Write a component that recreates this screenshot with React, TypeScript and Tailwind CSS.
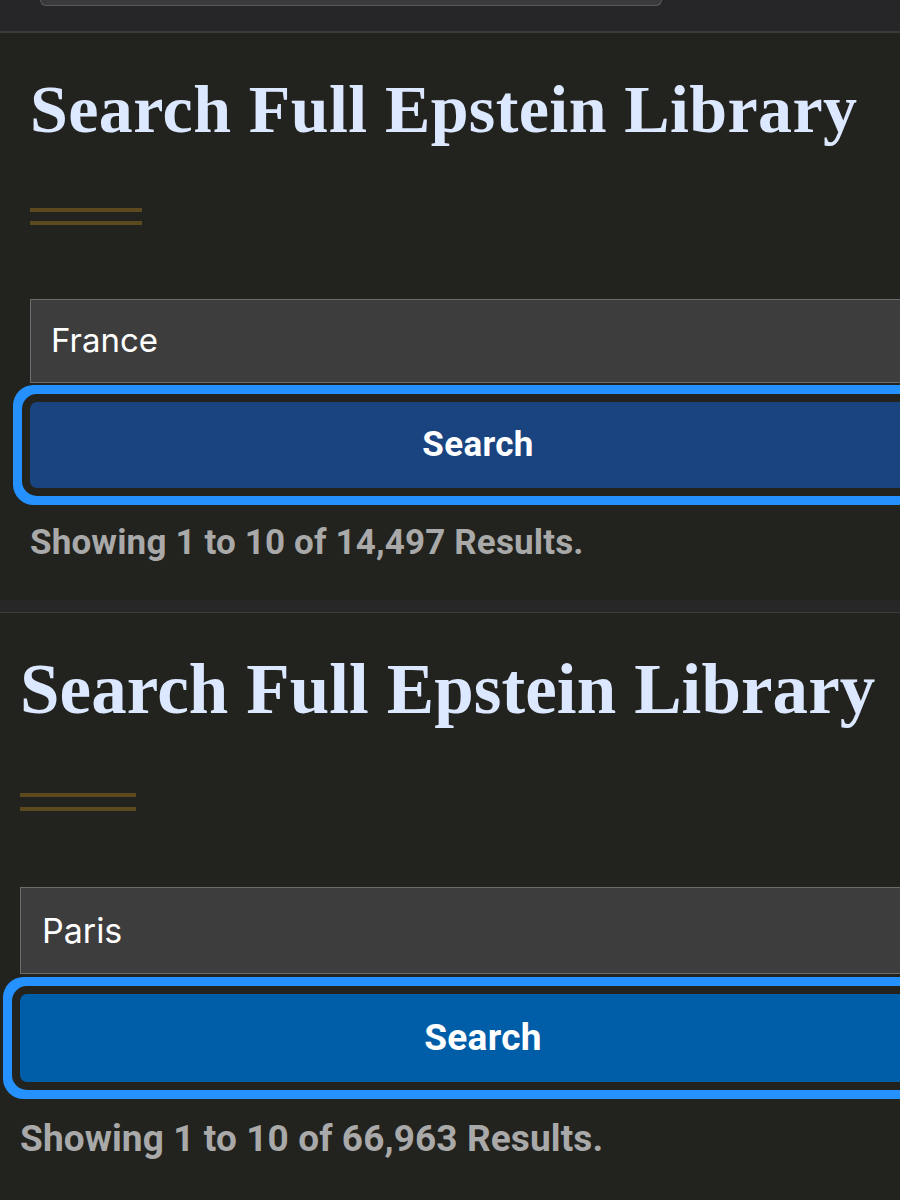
export default function App() {
  return (
    <div className="w-[900px] h-[1200px] overflow-hidden bg-[#22221e]">
      {/* cut-off toolbar from the previous screen */}
      <div className="h-[31px] bg-[#262628]">
        <div className="ml-[40px] w-[622px] h-[6px] rounded-b-[12px] bg-[#3a3a3c] border border-t-0 border-[#58585a]" />
      </div>
      <div className="h-[2px] bg-[#3a3a3b]" />

      {/* first capture */}
      <section className="h-[567px] pl-[30px] flex flex-col items-start">
        <h1 className="mt-[42px] text-[68px] leading-none font-bold tracking-[0.4px] text-[#dce8ff] whitespace-nowrap [font-family:'Liberation_Serif',serif]">
          Search Full Epstein Library
        </h1>
        <div className="mt-[65px] flex flex-col gap-[9px] w-[112px]">
          <div className="h-[4px] bg-[#5c4a1e]" />
          <div className="h-[4px] bg-[#5c4a1e]" />
        </div>
        <div className="mt-[74px] w-[896px] h-[84px] shrink-0 flex items-center pl-[20px] bg-[#3d3d3d] border border-[#6c6c6c] text-[33px] text-white [font-family:Inter,sans-serif]">
          France
        </div>
        <button className="block mt-[19px] w-[896px] h-[86px] shrink-0 rounded-[7px] bg-[#1a4480] text-white text-[35px] font-bold tracking-[0.3px] shadow-[0_0_0_8px_#22221e,0_0_0_17px_#2491ff] [font-family:Roboto,sans-serif]">
          Search
        </button>
        <p className="mt-[37px] text-[35px] leading-none font-bold tracking-[0.15px] text-[#a9a9a9] whitespace-nowrap [font-family:Roboto,sans-serif]">
          Showing 1 to 10 of 14,497 Results.
        </p>
      </section>

      <div className="h-[12px] bg-[#272727]" />
      <div className="h-px bg-[#3c3c3c]" />

      {/* second capture */}
      <section className="pl-[20px] flex flex-col items-start">
        <h1 className="mt-[41px] text-[71px] leading-none font-bold tracking-[0.1px] text-[#dce8ff] whitespace-nowrap [font-family:'Liberation_Serif',serif]">
          Search Full Epstein Library
        </h1>
        <div className="mt-[68px] flex flex-col gap-[10px] w-[116px]">
          <div className="h-[4px] bg-[#5c4a1e]" />
          <div className="h-[4px] bg-[#5c4a1e]" />
        </div>
        <div className="mt-[76px] w-[926px] h-[87px] shrink-0 flex items-center pl-[21px] bg-[#3d3d3d] border border-[#6c6c6c] text-[34px] text-white [font-family:Inter,sans-serif]">
          Paris
        </div>
        <button className="block mt-[20px] w-[926px] h-[88px] shrink-0 rounded-[7px] bg-[#005ea8] text-white text-[37px] font-bold tracking-[0.3px] shadow-[0_0_0_8px_#22221e,0_0_0_17px_#2491ff] [font-family:Roboto,sans-serif]">
          Search
        </button>
        <p className="mt-[38px] text-[37px] leading-none font-bold tracking-[0.1px] text-[#a9a9a9] whitespace-nowrap [font-family:Roboto,sans-serif]">
          Showing 1 to 10 of 66,963 Results.
        </p>
      </section>
    </div>
  );
}
